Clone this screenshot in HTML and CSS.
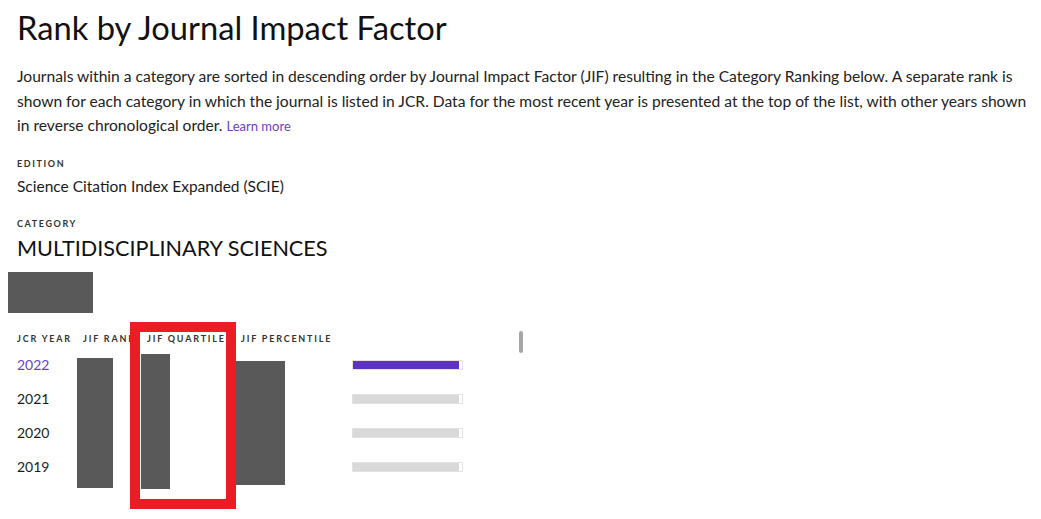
FILE: index.html
```html
<!DOCTYPE html>
<html lang="en">
<head>
<meta charset="UTF-8">
<meta name="viewport" content="width=device-width, initial-scale=1.0">
<title>Rank by Journal Impact Factor</title>
<link rel="stylesheet" href="styles.css">
</head>
<body>

<div class="page">
<h1 class="title">Rank by Journal Impact Factor</h1>
<p class="intro">Journals within a category are sorted in descending order by Journal Impact Factor (JIF) resulting in the Category Ranking below. A separate rank is shown for each category in which the journal is listed in JCR. Data for the most recent year is presented at the top of the list, with other years shown in reverse chronological order. <a href="#">Learn more</a></p>

<p class="label label-first">Edition</p>
<p class="value">Science Citation Index Expanded (SCIE)</p>

<p class="label">Category</p>
<p class="category">MULTIDISCIPLINARY SCIENCES</p>

<div class="rank-box">
  <div class="rank-table">
    <div class="head">JCR Year</div>
    <div class="head">JIF Rank</div>
    <div class="head">JIF Quartile</div>
    <div class="head">JIF Percentile</div>
    <div class="head"></div>

    <div class="cell year current">2022</div>
    <div class="cell"></div>
    <div class="cell"></div>
    <div class="cell"></div>
    <div class="cell"><div class="bar"><div class="fill current" style="width: 97%"></div></div></div>

    <div class="cell year">2021</div>
    <div class="cell"></div>
    <div class="cell"></div>
    <div class="cell"></div>
    <div class="cell"><div class="bar"><div class="fill" style="width: 97%"></div></div></div>

    <div class="cell year">2020</div>
    <div class="cell"></div>
    <div class="cell"></div>
    <div class="cell"></div>
    <div class="cell"><div class="bar"><div class="fill" style="width: 97%"></div></div></div>

    <div class="cell year">2019</div>
    <div class="cell"></div>
    <div class="cell"></div>
    <div class="cell"></div>
    <div class="cell"><div class="bar"><div class="fill" style="width: 97%"></div></div></div>
  </div>

  <!-- redacted values -->
  <div class="mask mask-tabs"></div>
  <div class="mask mask-rank"></div>
  <div class="mask mask-quartile"></div>
  <div class="mask mask-percentile"></div>
  <div class="highlight"></div>
  <div class="scroll-thumb"></div>
</div>
</div>

</body>
</html>
```

FILE: styles.css
```css
body {
    margin: 0;
    min-height: 100vh;
    background-color: #fff;
    color: #1b1b1b;
    font-family: Lato, "Noto Sans", sans-serif;
}

.page {
    position: relative;
    padding: 8px 12px 40px 17px;
}

.title {
    margin: 0;
    font-size: 32.7px;
    font-weight: 400;
    line-height: 40px;
    color: #111;
}

.intro {
    margin: 16px 0 0 0;
    font-size: 15.6px;
    line-height: 24.5px;
    color: #222;
}

.intro a {
    color: #6b3fc4;
    font-size: 13px;
    text-decoration: none;
}

.label {
    margin: 21px 0 0 0;
    font-size: 9px;
    font-weight: 700;
    line-height: 12px;
    letter-spacing: 1.6px;
    text-transform: uppercase;
    color: #333;
}

.label-first {
    margin-top: 19px;
}

.value {
    margin: 5px 0 0 0;
    font-size: 15.5px;
    line-height: 22px;
}

.category {
    margin: 4px 0 0 0;
    font-size: 21.6px;
    line-height: 28px;
    color: #111;
}

.rank-box {
    position: relative;
    padding-top: 69px;
}

.rank-table {
    display: grid;
    grid-template-columns: 66px 64px 94px 111px 111px;
    grid-template-rows: 16px;
    grid-auto-rows: 34px;
}

.head {
    font-size: 9px;
    font-weight: 700;
    line-height: 16px;
    letter-spacing: 1.8px;
    text-transform: uppercase;
    white-space: nowrap;
    overflow: hidden;
    color: #333;
}

.cell {
    display: flex;
    align-items: center;
    padding-top: 2px;
    font-size: 14px;
}

.year.current {
    color: #6b3fc4;
}

.bar {
    width: 109px;
    height: 8px;
    border: 1px solid #e2e2e2;
    background-color: #fff;
}

.fill {
    height: 100%;
    background-color: #d9d9d9;
}

.fill.current {
    background-color: #5e33bf;
}

.mask {
    position: absolute;
    background-color: #595959;
}

.mask-tabs {
    left: -9px;
    top: 10px;
    width: 85px;
    height: 41px;
}

.mask-rank {
    left: 60px;
    top: 96px;
    width: 36px;
    height: 130px;
}

.mask-quartile {
    left: 124px;
    top: 92px;
    width: 29px;
    height: 135px;
}

.mask-percentile {
    left: 219px;
    top: 99px;
    width: 49px;
    height: 124px;
}

.highlight {
    position: absolute;
    left: 113px;
    top: 60px;
    width: 86px;
    height: 167px;
    border: 10px solid #ed1c24;
}

.scroll-thumb {
    position: absolute;
    left: 502px;
    top: 69px;
    width: 4px;
    height: 22px;
    border-radius: 2px;
    background-color: #a6a6a6;
}
```
